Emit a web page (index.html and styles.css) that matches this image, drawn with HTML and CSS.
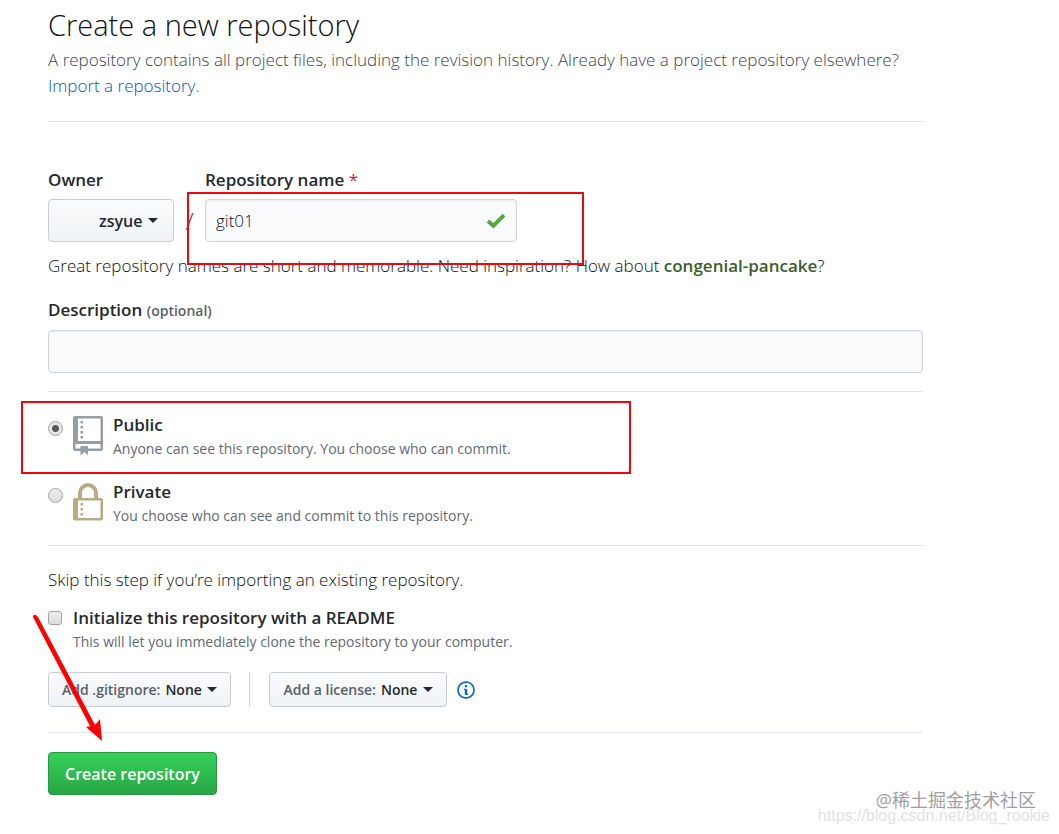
FILE: index.html
```html
<!DOCTYPE html>
<html lang="en">
<head>
    <meta charset="UTF-8">
    <meta name="viewport" content="width=device-width, initial-scale=1.0">
    <title>Create a new repository</title>
    <link rel="stylesheet" href="styles.css">
</head>
<body>
    <main class="container">
        <header class="subhead">
            <h1>Create a new repository</h1>
            <p>A repository contains all project files, including the revision history. Already have a project repository elsewhere? <a href="#">Import a repository.</a></p>
        </header>

        <form>
            <div class="name-row">
                <div class="field owner">
                    <label for="owner">Owner</label>
                    <div class="btn btn-owner">
                        <select id="owner"><option>zsyue</option></select>
                        <span class="caret"></span>
                    </div>
                </div>
                <span class="slash">/</span>
                <div class="field repo-name">
                    <label for="name">Repository name <span class="required">*</span></label>
                    <div class="input-wrap">
                        <input type="text" id="name" value="git01">
                        <svg class="check" viewBox="0 0 18 15"><path d="M1.5 7.5 L6.5 12 L16.5 2" fill="none" stroke="#58a63c" stroke-width="3.6"/></svg>
                    </div>
                </div>
            </div>
            <p class="hint">Great repository names are short and memorable. Need inspiration? How about <strong>congenial-pancake</strong>?</p>

            <div class="field description">
                <label for="description">Description <span class="optional">(optional)</span></label>
                <input type="text" id="description">
            </div>

            <div class="visibility">
                <div class="choice">
                    <input type="radio" name="visibility" id="public" checked>
                    <svg class="repo-icon" viewBox="0 0 30 40" fill="#959da5">
                        <path fill-rule="evenodd" d="M2 0H28Q30 0 30 2V33Q30 35 28 35H15V39.500L11.500 36L7.500 39.500V35H2Q0 35 0 33V2Q0 0 2 0ZM5 2.500V25H27.500V2.500ZM2.500 28V32.500H7.500V30H15V32.500H27.500V28Z"/>
                        <path d="M7.500 5H10V7.500H7.500ZM7.500 10H10V12.500H7.500ZM7.500 15H10V17.500H7.500ZM7.500 20H10V22.500H7.500Z"/>
                    </svg>
                    <div class="choice-text">
                        <label for="public">Public</label>
                        <p class="note">Anyone can see this repository. You choose who can commit.</p>
                    </div>
                </div>
                <div class="choice">
                    <input type="radio" name="visibility" id="private">
                    <svg class="repo-icon" viewBox="0 0 30 40" fill="#b9ac85">
                        <path fill-rule="evenodd" d="M5 15V10A10 10 0 0 1 25 10V15H28Q30 15 30 17V35.500Q30 37.500 28 37.500H2Q0 37.500 0 35.500V17Q0 15 2 15ZM9 15H21V10A6 6 0 0 0 9 10ZM5 17.500V35H27.500V17.500Z"/>
                        <path d="M7.500 20H10V22.500H7.500ZM7.500 25H10V27.500H7.500ZM7.500 30H10V32.500H7.500Z"/>
                    </svg>
                    <div class="choice-text">
                        <label for="private">Private</label>
                        <p class="note">You choose who can see and commit to this repository.</p>
                    </div>
                </div>
            </div>

            <div class="setup">
                <p>Skip this step if you’re importing an existing repository.</p>
                <div class="readme">
                    <input type="checkbox" id="readme">
                    <div>
                        <label for="readme">Initialize this repository with a README</label>
                        <p class="note">This will let you immediately clone the repository to your computer.</p>
                    </div>
                </div>
                <div class="extras">
                    <div class="btn btn-sm">
                        <label for="gitignore">Add .gitignore:</label>
                        <select id="gitignore"><option>None</option></select>
                        <span class="caret"></span>
                    </div>
                    <span class="divider"></span>
                    <div class="btn btn-sm">
                        <label for="license">Add a license:</label>
                        <select id="license"><option>None</option></select>
                        <span class="caret"></span>
                    </div>
                    <svg class="info" viewBox="0 0 14 16"><path fill="#0366d6" fill-rule="evenodd" d="M6.300 5.690a.942.942 0 0 1-.28-.7c0-.28.090-.52.280-.7.190-.18.420-.28.700-.28.280 0 .520.090.700.280.180.190.280.420.280.700 0 .280-.090.520-.280.700a1 1 0 0 1-.7.300c-.28 0-.52-.11-.7-.3zM8 7.990c-.02-.25-.11-.48-.31-.69-.2-.19-.42-.3-.69-.31H6c-.27.020-.48.130-.69.310-.2.200-.3.440-.31.690h1v3c.020.270.110.500.310.690.200.200.420.310.690.310h1c.270 0 .480-.11.690-.31.200-.19.300-.42.310-.69H8V7.980v.010zM7 2.300c-3.140 0-5.700 2.540-5.700 5.680 0 3.140 2.560 5.700 5.700 5.700s5.700-2.550 5.700-5.700c0-3.150-2.560-5.690-5.700-5.690v.010zM7 .980c3.860 0 7 3.140 7 7s-3.140 7-7 7-7-3.120-7-7 3.140-7 7-7z"/></svg>
                </div>
            </div>

            <button type="submit" class="btn-primary">Create repository</button>
        </form>
    </main>

    <!-- red marks over the form -->
    <div class="mark mark-name"></div>
    <div class="mark mark-public"></div>
    <svg class="arrow" viewBox="0 0 72 130" fill="#fe0000">
        <path d="M3 5 Q3 2 6 3 L8 5 L65 113 L61 116 Z"/>
        <path d="M72 129 L56 115 L62 114 L66 112 L70 107 Z"/>
    </svg>

    <div class="watermark">@稀土掘金技术社区</div>
    <div class="watermark-url">https://blog.csdn.net/Blog_rookie</div>
</body>
</html>
```
FILE: styles.css
```css
* {
    box-sizing: border-box;
}
body {
    position: relative;
    margin: 0;
    min-height: 100vh;
    background-color: #fff;
    color: #0d1114;
    font-family: "Open Sans", "Noto Sans CJK SC", sans-serif;
    font-size: 17px;
    font-weight: 300;
    line-height: 26px;
}
.container {
    max-width: 971px;
    padding: 6px 48px 38px;
}
h1, p {
    margin: 0;
    font-weight: 300;
}
h1 {
    font-size: 29px;
    line-height: 38px;
}
a {
    color: #0366d6;
    text-decoration: none;
}
input, select, button {
    margin: 0;
    font-family: inherit;
    color: inherit;
}
label, .btn select {
    color: #24292e;
    font-weight: 600;
}
.subhead {
    padding-bottom: 22px;
    margin-bottom: 45px;
    border-bottom: 1px solid #e1e4e8;
}
.subhead p {
    margin-top: 3px;
    color: #3c444c;
}
.subhead a {
    color: #0058c4;
}
.name-row {
    display: flex;
    align-items: flex-end;
}
.field {
    display: flex;
    flex-direction: column;
    gap: 6px;
}
.owner {
    width: 126px;
}
.slash {
    width: 31px;
    font-size: 24px;
    line-height: 43px;
    text-align: center;
    color: #3c444c;
}
.repo-name {
    width: 312px;
}
.required {
    color: #cb2431;
    font-weight: 400;
}
.input-wrap {
    position: relative;
}
input[type="text"] {
    display: block;
    width: 100%;
    height: 43px;
    padding: 0 10px;
    font-size: 17px;
    font-weight: 300;
    background-color: #fafbfc;
    border: 1px solid #d1d5da;
    border-radius: 4px;
    box-shadow: inset 0 1px 2px rgba(27, 31, 35, 0.075);
}
.check {
    position: absolute;
    top: 14px;
    right: 11px;
    width: 20px;
    height: 16px;
}
.btn {
    display: flex;
    align-items: center;
    height: 43px;
    padding: 0 15px;
    background-image: linear-gradient(#fafbfc, #eff3f6);
    border: 1px solid #c8ccd0;
    border-radius: 4px;
}
.btn select {
    appearance: none;
    padding: 0;
    border: 0;
    background: none;
    font-size: inherit;
}
.btn-owner {
    justify-content: flex-end;
    font-size: 16px;
}
.btn-sm {
    height: 35px;
    padding: 0 13px;
    font-size: 14px;
}
.btn-sm label {
    margin-right: 5px;
    color: #586069;
}
.caret {
    margin-left: 5px;
    border: 5px solid transparent;
    border-top-color: #24292e;
    border-bottom-width: 0;
}
.hint {
    margin-top: 11px;
}
.hint strong {
    color: #3b5f2b;
    font-weight: 600;
}
.description {
    margin-top: 18px;
}
.optional {
    font-size: 14px;
    color: #586069;
}
.visibility {
    margin-top: 18px;
    padding: 20px 0 16px;
    border-top: 1px solid #e1e4e8;
    border-bottom: 1px solid #e1e4e8;
}
.choice {
    display: flex;
    align-items: flex-start;
    min-height: 50px;
}
.choice + .choice {
    margin-top: 17px;
}
.choice-text label, .readme label {
    display: block;
}
.note {
    font-size: 14px;
    font-weight: 400;
    line-height: 22px;
    color: #626a73;
}
input[type="radio"], input[type="checkbox"] {
    appearance: none;
    flex: none;
    border: 1px solid #a3a3a3;
    background-image: linear-gradient(#ededed, #dcdcdc);
}
input[type="radio"] {
    width: 15px;
    height: 15px;
    margin: 9px 10px 0 0;
    border-radius: 50%;
}
input[type="radio"]:checked {
    background-image: radial-gradient(circle, #555 3px, #e6e6e6 4px);
}
input[type="checkbox"] {
    width: 14px;
    height: 14px;
    margin: 6px 11px 0 0;
    border-radius: 3px;
}
.repo-icon {
    flex: none;
    width: 30px;
    height: 40px;
    margin: 4px 10px 0 0;
}
.setup {
    padding: 21px 0 25px;
    margin-bottom: 19px;
    border-bottom: 1px solid #e1e4e8;
}
.readme {
    display: flex;
    align-items: flex-start;
    margin-top: 12px;
}
.extras {
    display: flex;
    align-items: center;
    margin-top: 19px;
}
.divider {
    width: 1px;
    height: 35px;
    margin: 0 19px 0 18px;
    background-color: #d1d5da;
}
.info {
    width: 18px;
    height: 20px;
    margin-left: 10px;
}
.btn-primary {
    height: 43px;
    padding: 0 16px;
    color: #fff;
    font-size: 16px;
    font-weight: 600;
    cursor: pointer;
    background-image: linear-gradient(#34d058, #28a745);
    border: 1px solid #26963f;
    border-radius: 4px;
}
/* annotations */
.mark {
    position: absolute;
    border: 2px solid #f0060b;
}
.mark-name {
    left: 187px;
    top: 192px;
    width: 397px;
    height: 73px;
}
.mark-public {
    left: 21px;
    top: 401px;
    width: 610px;
    height: 73px;
}
.arrow {
    position: absolute;
    left: 30px;
    top: 612px;
    width: 72px;
    height: 130px;
}
.watermark, .watermark-url {
    position: absolute;
    line-height: 20px;
    white-space: nowrap;
}
.watermark {
    right: 23px;
    bottom: 24px;
    font-size: 18px;
    font-weight: 400;
    color: #a0a0a0;
}
.watermark-url {
    right: 9px;
    bottom: 8px;
    font-family: "Liberation Sans", sans-serif;
    font-size: 16px;
    color: #e2e2e2;
}
```
